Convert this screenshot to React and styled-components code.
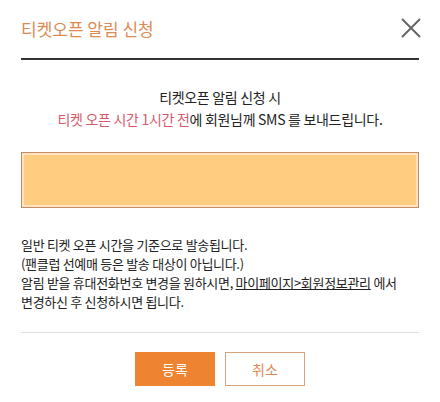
import React from 'react';
import styled, { createGlobalStyle } from 'styled-components';

const GlobalStyle = createGlobalStyle`
    body {
        margin: 0;
        background: #fff;
        font-family: "Noto Sans CJK KR", "Noto Sans", sans-serif;
        color: #222;
    }
`;

const Modal = styled.div`
    width: 440px;
    height: 402px;
    padding: 0 21px;
    box-sizing: border-box;
    background: #fff;
`;

const Header = styled.div`
    height: 60px;
    display: flex;
    align-items: center;
    justify-content: space-between;
    border-bottom: 2px solid #333;
    box-sizing: border-box;
    padding-bottom: 2px;
`;

const Title = styled.h2`
    margin: 0;
    font-size: 17px;
    font-weight: 400;
    color: #dc8b55;
    letter-spacing: 0;
`;

const CloseButton = styled.button`
    width: 22px;
    height: 22px;
    padding: 0;
    border: none;
    background: none;
    margin-right: -3px;
    cursor: pointer;
    display: flex;
    align-items: center;
    justify-content: center;
`;

const Notice = styled.p`
    margin: 26px 0 0;
    text-align: center;
    font-size: 14px;
    line-height: 22px;
    color: #222;
    letter-spacing: -0.3px;
`;

const Highlight = styled.span`
    color: #d9586b;
`;

const PhoneBox = styled.div`
    margin-top: 22px;
    height: 56px;
    box-sizing: border-box;
    border: 1px solid #c48a62;
    box-shadow: inset 0 0 0 2px #ffe3c2;
    background: #ffcc80;
`;

const Guide = styled.p`
    margin: 27px 0 0;
    font-size: 13px;
    line-height: 19px;
    color: #222;
    letter-spacing: -0.3px;
`;

const Link = styled.a`
    color: #222;
    text-decoration: underline;
`;

const Divider = styled.hr`
    margin: 21px 0 0;
    border: none;
    border-top: 1px solid #ddd;
`;

const Actions = styled.div`
    display: flex;
    justify-content: center;
    gap: 10px;
    margin-top: 19px;
`;

const Button = styled.button`
    width: 80px;
    height: 34px;
    box-sizing: border-box;
    font-family: inherit;
    font-size: 14px;
    cursor: pointer;
    border: 1px solid ${p => (p.$primary ? '#ee8431' : '#d8a27a')};
    background: ${p => (p.$primary ? '#ee8431' : '#fff')};
    color: ${p => (p.$primary ? '#fff' : '#dc8b55')};
`;

function App() {
    return (
        <>
            <GlobalStyle />
            <Modal>
                <Header>
                    <Title>티켓오픈 알림 신청</Title>
                    <CloseButton aria-label="닫기">
                        <svg width="20" height="20" viewBox="0 0 20 20">
                            <path d="M1 1L19 19M19 1L1 19" stroke="#666" strokeWidth="2" fill="none" />
                        </svg>
                    </CloseButton>
                </Header>

                <Notice>
                    티켓오픈 알림 신청 시
                    <br />
                    <Highlight>티켓 오픈 시간 1시간 전</Highlight>에 회원님께 SMS 를 보내드립니다.
                </Notice>

                <PhoneBox />

                <Guide>
                    일반 티켓 오픈 시간을 기준으로 발송됩니다.
                    <br />
                    (팬클럽 선예매 등은 발송 대상이 아닙니다.)
                    <br />
                    알림 받을 휴대전화번호 변경을 원하시면, <Link>마이페이지&gt;회원정보관리</Link> 에서
                    <br />
                    변경하신 후 신청하시면 됩니다.
                </Guide>

                <Divider />

                <Actions>
                    <Button $primary>등록</Button>
                    <Button>취소</Button>
                </Actions>
            </Modal>
        </>
    );
}

export default App;
